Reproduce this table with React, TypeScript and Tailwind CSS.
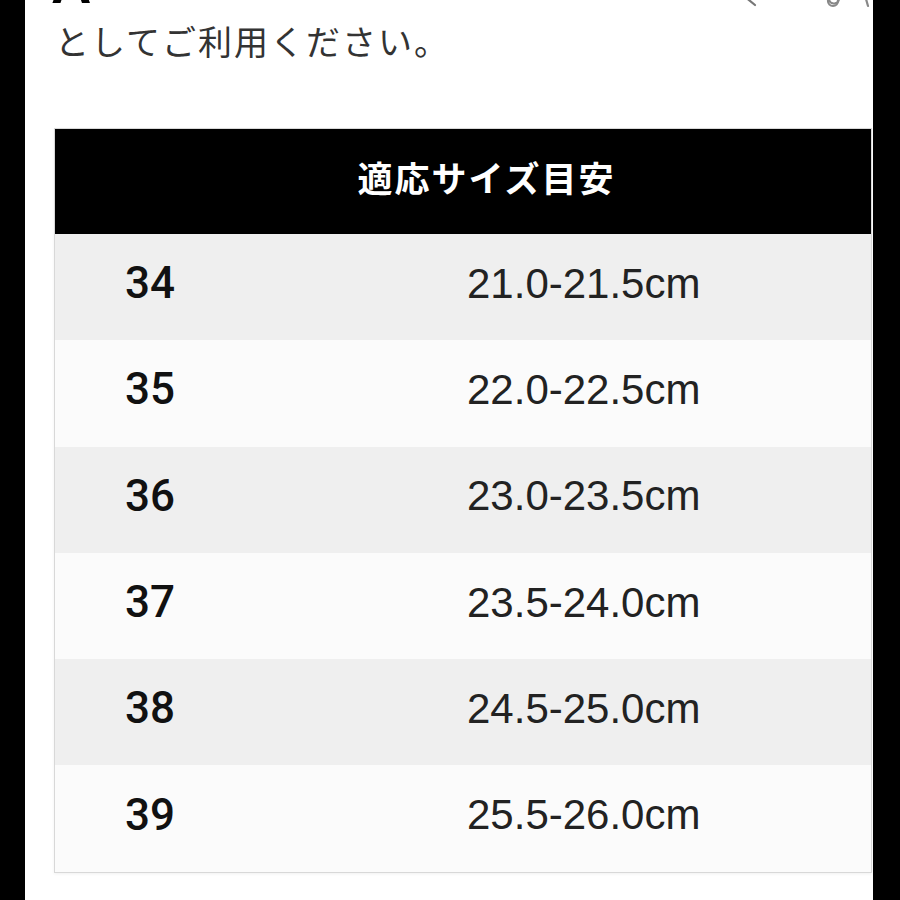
import React from "react";

const rows = [
  { size: "34", range: "21.0-21.5cm" },
  { size: "35", range: "22.0-22.5cm" },
  { size: "36", range: "23.0-23.5cm" },
  { size: "37", range: "23.5-24.0cm" },
  { size: "38", range: "24.5-25.0cm" },
  { size: "39", range: "25.5-26.0cm" },
];

export default function App() {
  return (
    <div className="w-[900px] h-[900px] flex bg-white overflow-hidden">
      <div className="w-[25px] shrink-0 bg-black" />
      <div className="flex-1 flex flex-col">
        {/* cut-off top bar */}
        <div className="h-[10px] overflow-hidden flex items-start">
          <div
            className="ml-[26px] -mt-[44px] text-[56px] leading-[56px] font-bold text-black"
            style={{ fontFamily: '"Liberation Sans", Arial, sans-serif' }}
          >
            A
          </div>
          <div className="flex-1" />
          <svg width="20" height="10" viewBox="0 0 20 10" className="mr-[64px]">
            <path d="M2 -4 L13 5" stroke="#777" strokeWidth="2.2" fill="none" strokeLinecap="round" />
          </svg>
          <svg width="44" height="10" viewBox="0 0 44 10" className="mr-[3px]">
            <path d="M3 -2 A5 5 0 0 0 13 -1 L40 -1 L42 6" stroke="#888" strokeWidth="2.2" fill="none" strokeLinecap="round" />
            <circle cx="7" cy="1" r="5" stroke="#888" strokeWidth="2.2" fill="none" />
          </svg>
        </div>
        <p
          className="mt-[11px] ml-[30px] text-[34px] leading-[40px] tracking-[2px] text-[#333]"
          style={{ fontFamily: '"Noto Sans CJK JP", "Noto Sans", sans-serif' }}
        >
          としてご利用ください。
        </p>
        <div className="mt-[67px] ml-[29px] w-[818px] border border-[#d8d8d8] shadow-[0_1px_3px_rgba(0,0,0,0.06)]">
          <div className="h-[105px] bg-black flex items-center justify-center pl-[47px] pb-[8px]">
            <span
              className="text-white text-[35px] font-bold tracking-[2px]"
              style={{ fontFamily: '"Noto Sans CJK JP", "Noto Sans", sans-serif' }}
            >
              適応サイズ目安
            </span>
          </div>
          {rows.map((r, i) => (
            <div
              key={r.size}
              className={`h-[106.3px] flex items-center pb-[8px] ${i % 2 === 0 ? "bg-[#efefef]" : "bg-[#fbfbfb]"}`}
            >
              <span
                className="ml-[70px] w-[342px] text-[44px] font-medium text-[#111]"
                style={{ fontFamily: 'Roboto, "Liberation Sans", Arial, sans-serif' }}
              >
                {r.size}
              </span>
              <span
                className="text-[42px] text-[#222]"
                style={{ fontFamily: '"Liberation Sans", Arial, sans-serif' }}
              >
                {r.range}
              </span>
            </div>
          ))}
        </div>
      </div>
      <div className="w-[27px] shrink-0 bg-black" />
    </div>
  );
}
